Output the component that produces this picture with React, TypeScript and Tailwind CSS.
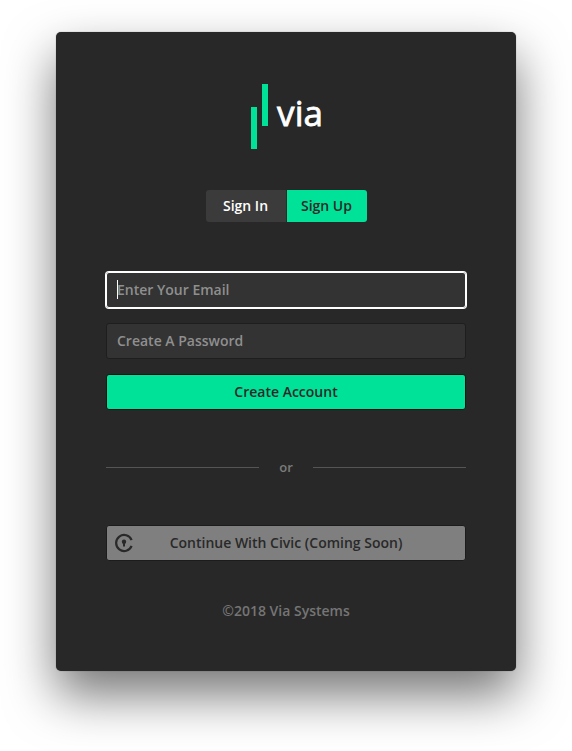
import React from "react";

function Logo() {
  return (
    <svg width="72" height="65" viewBox="0 0 72 65" className="block overflow-visible" role="img" aria-label="via">
      <rect x="0" y="23" width="6" height="42" fill="#00e297" />
      <rect x="11" y="0" width="6" height="42" fill="#00e297" />
      <text x="26 43.8 52.4" y="41.6" fontSize="35" fill="#fff" stroke="#fff" strokeWidth="0.8" className="font-['Open_Sans',sans-serif] font-normal">
        via
      </text>
    </svg>
  );
}

function CivicIcon() {
  return (
    <svg width="20" height="20" viewBox="0 0 20 20" fill="none" className="absolute left-[7px] top-[7px]">
      <path d="M17.6 7.1A8 8 0 1 0 17.6 12.9" stroke="#292929" strokeWidth="2.2" />
      <circle cx="10" cy="8.8" r="2.2" fill="#292929" />
      <path d="M9 9.5h2v3.9H9z" fill="#292929" />
    </svg>
  );
}

export default function App() {
  return (
    <main className="h-[751px] w-[572px] overflow-hidden bg-white px-14 pt-8 font-['Open_Sans',sans-serif] text-sm font-semibold">
      <section className="flex h-[639px] flex-col items-center rounded-[5px] bg-[#282828] px-[50px] pt-[52px] shadow-[0_0_1px_rgba(0,0,0,0.5),0_24px_50px_rgba(0,0,0,0.54)]">
        <div className="flex w-[70px] justify-start">
          <Logo />
        </div>

        <div className="mt-[41px] flex h-8 w-[161px] gap-px overflow-hidden rounded-[3px] leading-8">
          <button className="w-20 bg-[#3b3b3b] pb-px text-white">Sign In</button>
          <button className="w-20 bg-[#00e297] pb-px text-[#292929]">Sign Up</button>
        </div>

        <form className="mt-[50px] flex w-full flex-col gap-[15px]">
          <div className="flex h-9 items-center rounded-[3px] bg-[#333] px-[11px] pb-px text-[#8f8f8f] shadow-[0_0_0_1px_white,inset_0_0_0_1px_white]">
            <span className="-mr-px h-[19px] w-px bg-white" />
            Enter Your Email
          </div>
          <div className="flex h-9 items-center rounded-[3px] border border-[#1e1e1e] bg-[#333] px-2.5 pb-px text-[#8f8f8f]">
            Create A Password
          </div>
          <button type="button" className="h-9 rounded-[3px] border border-[#111] bg-[#00e297] pb-px text-[#292929]">
            Create Account
          </button>
        </form>

        <div className="mt-[47px] flex h-5 w-full items-center justify-between text-[13px] text-[#7c7c7c]">
          <span className="h-px w-[153px] bg-[#555]" />
          <span>or</span>
          <span className="h-px w-[153px] bg-[#555]" />
        </div>

        <button className="relative mt-12 h-9 w-full rounded-[3px] border border-[#1c1c1c] bg-[#7f7f7f] pb-px text-[#292929]">
          <CivicIcon />
          Continue With Civic (Coming Soon)
        </button>

        <footer className="mt-10 leading-5 text-[#757575]">©2018 Via Systems</footer>
      </section>
    </main>
  );
}
